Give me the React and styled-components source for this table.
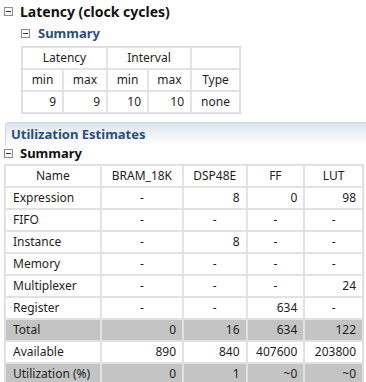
import styled, { createGlobalStyle } from "styled-components";

const GlobalStyle = createGlobalStyle`
  body {
    margin: 0;
    background: #ffffff;
    font-family: "Noto Sans", "Liberation Sans", sans-serif;
    color: #1a1a1a;
  }
`;

const Page = styled.div`
  width: 366px;
  height: 382px;
  overflow: hidden;
  background: #fff;
`;

const Toggle = styled.span`
  box-sizing: border-box;
  display: inline-flex;
  align-items: center;
  justify-content: center;
  width: 9px;
  height: 9px;
  border: 1px solid #8c8c8c;
  background: #fff;
  flex: none;
  &::after {
    content: "";
    width: 5px;
    height: 1px;
    background: #333;
  }
`;

const Heading = styled.div`
  display: flex;
  align-items: center;
  gap: ${(p) => p.$gap || 7}px;
  height: ${(p) => p.$h || 16}px;
  padding-left: ${(p) => p.$indent || 0}px;
  font-weight: bold;
  font-size: ${(p) => p.$size || 13}px;
  color: ${(p) => (p.$blue ? "#2b4d7c" : "#111")};
`;

const Latency = styled.section`
  padding: 3px 0 0 4px;
`;

const SubBlock = styled.div`
  padding: 6px 0 0 17px;
`;

const Table = styled.table`
  border-collapse: separate;
  border-spacing: 0;
  font-size: 12px;
  color: #1e1e1e;
  border: 1px solid #dedede;
  margin-top: ${(p) => p.$top || 0}px;
`;

const Cell = styled.td`
  box-sizing: border-box;
  height: 22px;
  padding: 0 ${(p) => p.$pad || 6}px;
  border: 1px solid #e2e2e2;
  text-align: ${(p) => p.$align || "center"};
  background: ${(p) => (p.$shade ? "#c4c4c4" : "#fff")};
  white-space: nowrap;
  line-height: 20px;
`;

const Panel = styled.section`
  margin: 8px 0 0 5px;
  border-top: 1px solid #cfd6e0;
  border-left: 1px solid #cfd6e0;
  border-top-left-radius: 4px;
  height: 22px;
  padding-left: 5px;
  display: flex;
  align-items: center;
  background: linear-gradient(to bottom, #dde3ed 0%, #eef1f6 50%, #ffffff 100%);
`;

const PanelTitle = styled.span`
  font-weight: bold;
  font-size: 13px;
  color: #2b4d7c;
`;

const Utilization = styled.section`
  padding: 0 0 0 4px;
`;

const latency = { min: 9, max: 9, imin: 10, imax: 10, type: "none" };

const columns = [
  { key: "bram", label: "BRAM_18K", w: 83 },
  { key: "dsp", label: "DSP48E", w: 64 },
  { key: "ff", label: "FF", w: 58 },
  { key: "lut", label: "LUT", w: 59 },
];

const rows = [
  { name: "Expression", bram: "-", dsp: 8, ff: 0, lut: 98 },
  { name: "FIFO", bram: "-", dsp: "-", ff: "-", lut: "-" },
  { name: "Instance", bram: "-", dsp: 8, ff: "-", lut: "-" },
  { name: "Memory", bram: "-", dsp: "-", ff: "-", lut: "-" },
  { name: "Multiplexer", bram: "-", dsp: "-", ff: "-", lut: 24 },
  { name: "Register", bram: "-", dsp: "-", ff: 634, lut: "-" },
  { name: "Total", bram: 0, dsp: 16, ff: 634, lut: 122, shade: true },
  { name: "Available", bram: 890, dsp: 840, ff: 407600, lut: 203800 },
  { name: "Utilization (%)", bram: 0, dsp: 1, ff: "~0", lut: "~0", shade: true },
];

function Value({ v, shade }) {
  const dash = v === "-";
  return (
    <Cell $align={dash ? "center" : "right"} $shade={shade}>
      {v}
    </Cell>
  );
}

export default function App() {
  return (
    <Page>
      <GlobalStyle />
      <Latency>
        <Heading $size={14}>
          <Toggle />
          Latency (clock cycles)
        </Heading>
        <SubBlock>
          <Heading $blue $gap={8}>
            <Toggle />
            Summary
          </Heading>
          <Table $top={5}>
            <tbody>
              <tr>
                <Cell colSpan={2}>Latency</Cell>
                <Cell colSpan={2}>Interval</Cell>
                <Cell />
              </tr>
              <tr>
                <Cell style={{ width: 41 }}>min</Cell>
                <Cell style={{ width: 44 }}>max</Cell>
                <Cell style={{ width: 41 }}>min</Cell>
                <Cell style={{ width: 43 }}>max</Cell>
                <Cell style={{ width: 49 }}>Type</Cell>
              </tr>
              <tr>
                <Cell $align="right">{latency.min}</Cell>
                <Cell $align="right">{latency.max}</Cell>
                <Cell $align="right">{latency.imin}</Cell>
                <Cell $align="right">{latency.imax}</Cell>
                <Cell>{latency.type}</Cell>
              </tr>
            </tbody>
          </Table>
        </SubBlock>
      </Latency>

      <Panel>
        <PanelTitle>Utilization Estimates</PanelTitle>
      </Panel>

      <Utilization>
        <Heading>
          <Toggle />
          Summary
        </Heading>
        <Table $top={3} style={{ width: 360 }}>
          <tbody>
            <tr>
              <Cell style={{ width: 96 }}>Name</Cell>
              {columns.map((c) => (
                <Cell key={c.key} style={{ width: c.w }}>
                  {c.label}
                </Cell>
              ))}
            </tr>
            {rows.map((r) => (
              <tr key={r.name}>
                <Cell $align="left" $pad={7} $shade={r.shade}>
                  {r.name}
                </Cell>
                {columns.map((c) => (
                  <Value key={c.key} v={r[c.key]} shade={r.shade} />
                ))}
              </tr>
            ))}
          </tbody>
        </Table>
      </Utilization>
    </Page>
  );
}
